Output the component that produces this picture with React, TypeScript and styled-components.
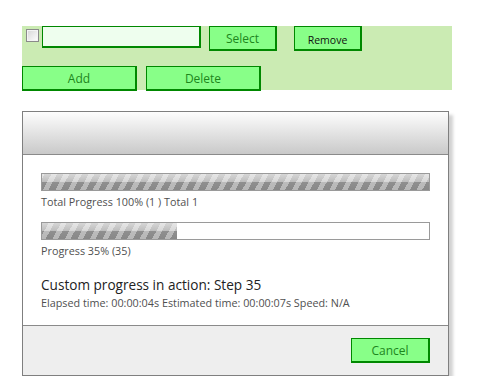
import styled, { createGlobalStyle } from 'styled-components';

const GlobalStyle = createGlobalStyle`
  body {
    margin: 0;
    background: #ffffff;
    font-family: 'Open Sans', 'Noto Sans', sans-serif;
  }
`;

const Page = styled.div`
  padding: 26px 0 0 22px;
  width: 430px;
`;

const Toolbar = styled.div`
  background: #cbebb3;
  height: 64px;
  display: flex;
  flex-direction: column;
  gap: 15px;
`;

const ToolRow = styled.div`
  display: flex;
  align-items: flex-start;
`;

const CheckBox = styled.span`
  box-sizing: border-box;
  width: 13px;
  height: 13px;
  margin: 3px 3px 0 4px;
  border: 1px solid #8a8a8a;
  background: linear-gradient(135deg, #d6d6d6, #ffffff);
  box-shadow: inset 0 0 0 1px #f4f4f4;
`;

const TextInput = styled.div`
  box-sizing: border-box;
  width: 159px;
  height: 22px;
  border: 2px solid #008800;
  border-width: 1px 2px 2px 1px;
  background: #eefeee;
`;

const Button = styled.button<{ $w: number; $gap?: number; $dark?: boolean }>`
  box-sizing: border-box;
  width: ${(p) => p.$w}px;
  height: 25px;
  margin-left: ${(p) => p.$gap ?? 0}px;
  padding: ${(p) => (p.$dark ? '3px 0 0' : '1px 0 0')};
  background: #88ff88;
  border: 1px solid #008800;
  border-width: 1px 2px 2px 1px;
  color: ${(p) => (p.$dark ? '#111111' : '#1d861d')};
  font-family: inherit;
  font-size: ${(p) => (p.$dark ? '10.5px' : '12px')};
  line-height: 20px;
`;

const Dialog = styled.div`
  margin-top: 21px;
  width: 427px;
  box-sizing: border-box;
  border: 1px solid #7f7f7f;
  box-shadow: 4px 4px 3px rgba(0, 0, 0, 0.18);
  background: #ffffff;
`;

const DialogHeader = styled.div`
  height: 42px;
  background: linear-gradient(#fdfdfd, #c9c9c9);
  border-bottom: 1px solid #8a8a8a;
`;

const DialogBody = styled.div`
  padding: 18px;
  height: 134px;
  color: #505050;
  font-size: 10.8px;
`;

const Bar = styled.div`
  box-sizing: border-box;
  height: 18px;
  border: 1px solid #9a9a9a;
  background: #ffffff;
`;

const BarFill = styled.div`
  height: 100%;
  background:
    repeating-linear-gradient(
      -62deg,
      rgba(255, 255, 255, 0) 0 6px,
      rgba(255, 255, 255, 0.4) 6px 11px
    ),
    linear-gradient(#d6d6d6 0%, #bcbcbc 50%, #8f8f8f 52%, #888888 100%);
`;

const BarCaption = styled.div`
  margin: 4px 0 13px;
  line-height: 14px;
`;

const StepTitle = styled.div`
  margin-top: 18px;
  font-size: 13.6px;
  color: #222222;
  line-height: 18px;
`;

const TimeLine = styled.div`
  margin-top: 2px;
  line-height: 14px;
  font-size: 10.8px;
`;

const DialogFooter = styled.div`
  height: 50px;
  background: #eeeeee;
  border-top: 1px solid #8a8a8a;
  display: flex;
  justify-content: flex-end;
  align-items: flex-start;
  padding: 12px 18px 0 0;
  box-sizing: border-box;
`;

function App() {
  const total = 100;
  const step = 35;

  return (
    <>
      <GlobalStyle />
      <Page>
        <Toolbar>
          <ToolRow>
            <CheckBox />
            <TextInput />
            <Button $w={68} $gap={8}>{'Select'}</Button>
            <Button $w={68} $gap={17} $dark>{'Remove'}</Button>
          </ToolRow>
          <ToolRow>
            <Button $w={115}>{'Add'}</Button>
            <Button $w={115} $gap={9}>{'Delete'}</Button>
          </ToolRow>
        </Toolbar>

        <Dialog>
          <DialogHeader />
          <DialogBody>
            <Bar>
              <BarFill style={{ width: `${total}%` }} />
            </Bar>
            <BarCaption>{'Total Progress 100% (1 ) Total 1'}</BarCaption>
            <Bar>
              <BarFill style={{ width: `${step}%` }} />
            </Bar>
            <BarCaption>{`Progress ${step}% (${step})`}</BarCaption>
            <StepTitle>{`Custom progress in action: Step ${step}`}</StepTitle>
            <TimeLine>{'Elapsed time: 00:00:04s Estimated time: 00:00:07s Speed: N/A'}</TimeLine>
          </DialogBody>
          <DialogFooter>
            <Button $w={79}>{'Cancel'}</Button>
          </DialogFooter>
        </Dialog>
      </Page>
    </>
  );
}

export default App;
